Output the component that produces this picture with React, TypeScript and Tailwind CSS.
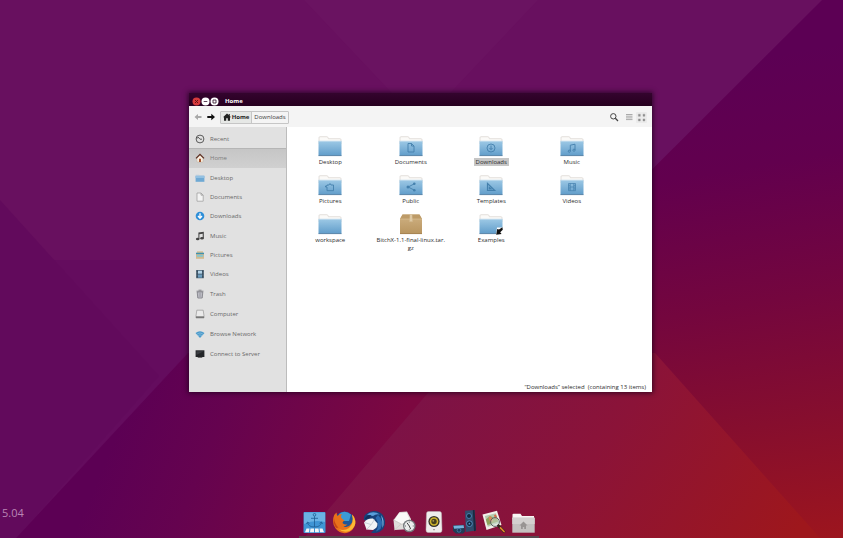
import { useState, type ReactNode } from "react";

type Glyph =
  | "none" | "document" | "download" | "music" | "picture" | "share" | "template" | "video" | "link";

const places: { name: string; icon: ReactNode }[] = [
  {
    name: "Recent",
    icon: (
      <g fill="none" stroke="#4c4c4c" strokeWidth="0.9">
        <circle cx="5" cy="5" r="3.9" />
        <path d="M3 3 5 5.2H7M1 3.5 3 4" />
      </g>
    ),
  },
  {
    name: "Home",
    icon: (
      <g>
        <path d="M2 5 5 2.2 8 5V9H2Z" fill="#f8eee0" stroke="#b9a793" strokeWidth="0.4" />
        <path d="M4 5.8H6V9H4Z" fill="#a5532e" />
        <path d="M1 5.4 5 1.4 9 5.4" fill="none" stroke="#5e2f22" strokeWidth="1.3" />
      </g>
    ),
  },
  {
    name: "Desktop",
    icon: (
      <g>
        <path d="M.8 1.5H4L4.5 2.3H9V5H.8Z" fill="#cfd8df" />
        <path d="M.6 2.8H9.4V8.8H.6Z" fill="#6fa9d4" />
        <path d="M.6 2.8H9.4V5H.6Z" fill="#93c1e2" />
      </g>
    ),
  },
  {
    name: "Documents",
    icon: <path d="M2 1H6L8.2 3.2V9.2H2ZM6 1V3.2H8.2" fill="#f3f3f3" stroke="#999" strokeWidth="0.7" />,
  },
  {
    name: "Downloads",
    icon: (
      <g>
        <circle cx="5" cy="5" r="4.3" fill="#2f8fd8" />
        <path d="M5 2.2V6.6M3 5 5 7.2 7 5" fill="none" stroke="#fff" strokeWidth="1.3" />
      </g>
    ),
  },
  {
    name: "Music",
    icon: (
      <g fill="#444">
        <path d="M3.4 1.6 8.8.8V7H7.7V2.7L4.4 3.2V8H3.4Z" />
        <ellipse cx="2.7" cy="8" rx="1.8" ry="1.3" />
        <ellipse cx="7" cy="7.2" rx="1.8" ry="1.3" />
      </g>
    ),
  },
  {
    name: "Pictures",
    icon: (
      <g>
        <path d="M2 1.2H8V3H2Z" fill="#d9c39a" />
        <path d="M1 2.7H9V5H1Z" fill="#3f91ad" />
        <path d="M1 4.2H9V8.8H1Z" fill="#d3ba8e" />
        <path d="M1.8 4.9H8.2V6.8H1.8Z" fill="#87c6d0" />
      </g>
    ),
  },
  {
    name: "Videos",
    icon: (
      <g>
        <path d="M1.2 1H8.8V9.2H1.2Z" fill="#344b5d" />
        <path d="M3 1.6H7V4.7H3Z" fill="#b3d2e6" />
        <path d="M3 5.4H7V8.7H3Z" fill="#6c9cbd" />
        <path d="M2 1.4V9" stroke="#8797a5" strokeWidth="0.6" strokeDasharray="0.8 0.8" />
        <path d="M8 1.4V9" stroke="#8797a5" strokeWidth="0.6" strokeDasharray="0.8 0.8" />
      </g>
    ),
  },
  {
    name: "Trash",
    icon: (
      <g fill="none" stroke="#77777f" strokeWidth="0.8">
        <path d="M1.5 2.2H8.5M3.5 1.2H6.5" />
        <path d="M2.2 3 2.8 9H7.2L7.8 3Z" fill="#c8c8d0" />
        <path d="M4.2 4V8M5.8 4V8" strokeWidth="0.5" />
      </g>
    ),
  },
  {
    name: "Computer",
    icon: (
      <g>
        <path d="M1.8 1.2H8.2L9 6.8V9H1V6.8Z" fill="#eaeaea" stroke="#8b8b8b" strokeWidth="0.6" />
        <path d="M1 7.3H9V9H1Z" fill="#777" />
      </g>
    ),
  },
  {
    name: "Browse Network",
    icon: (
      <g>
        <path d="M.5 4.1Q5 .2 9.5 4.1L5 9Z" fill="#4a9acb" />
        <path d="M1.9 5.2Q5 2.6 8.1 5.2M3.1 6.6Q5 5 6.9 6.6" fill="none" stroke="#a9cfe4" strokeWidth="0.5" />
      </g>
    ),
  },
  {
    name: "Connect to Server",
    icon: (
      <g>
        <path d="M.6 1.3H9.4V8H.6Z" fill="#232528" />
        <path d="M1.4 2.3H8.6L1.4 6Z" fill="#3a3d41" />
        <path d="M3 8H7L7.5 9H2.5Z" fill="#707070" />
      </g>
    ),
  },
];

const files: { name: string; glyph: Glyph; archive?: boolean }[] = [
  { name: "Desktop", glyph: "none" },
  { name: "Documents", glyph: "document" },
  { name: "Downloads", glyph: "download" },
  { name: "Music", glyph: "music" },
  { name: "Pictures", glyph: "picture" },
  { name: "Public", glyph: "share" },
  { name: "Templates", glyph: "template" },
  { name: "Videos", glyph: "video" },
  { name: "workspace", glyph: "none" },
  { name: "BitchX-1.1-final-linux.tar.gz", glyph: "none", archive: true },
  { name: "Examples", glyph: "link" },
];

function Wallpaper() {
  return (
    <svg
      className="absolute inset-0 h-full w-full"
      viewBox="0 0 843 538"
      preserveAspectRatio="none"
      aria-hidden="true"
    >
      <defs>
        <linearGradient id="right" gradientUnits="userSpaceOnUse" x1="740" y1="60" x2="820" y2="538">
          <stop offset="0" stopColor="#5c0054" />
          <stop offset="0.22" stopColor="#62004e" />
          <stop offset="0.5" stopColor="#74063e" />
          <stop offset="0.75" stopColor="#860e2e" />
          <stop offset="1" stopColor="#9c151e" />
        </linearGradient>
        <linearGradient id="band" gradientUnits="userSpaceOnUse" x1="130" y1="400" x2="370" y2="500">
          <stop offset="0" stopColor="#5c0054" />
          <stop offset="0.35" stopColor="#65034f" />
          <stop offset="1" stopColor="#7c0840" />
        </linearGradient>
        <linearGradient id="low" gradientUnits="userSpaceOnUse" x1="400" y1="370" x2="730" y2="620">
          <stop offset="0" stopColor="#7a1249" />
          <stop offset="0.5" stopColor="#8b1338" />
          <stop offset="1" stopColor="#9e171c" />
        </linearGradient>
      </defs>
      <path d="M0 0H843V538H0Z" fill="#68105f" />
      <path d="M304 0H538L421 124Z" fill="#6a1361" />
      <path d="M0 260H280L188 353 16 538H0Z" fill="#640c5e" />
      <path d="M0 200 159 376 16 538H0Z" fill="#620a5c" />
      <path d="M822 0H843V538H468V353Z" fill="url(#right)" />
      <path d="M188 353H468V538H16Z" fill="url(#band)" />
      <path d="M468 353H655L820 538H304L427 394Z" fill="url(#low)" />
    </svg>
  );
}

function FolderGlyph({ glyph }: { glyph: Glyph }) {
  const line = { fill: "none", stroke: "#4480ad", strokeWidth: 0.9 };
  switch (glyph) {
    case "document":
      return <path {...line} d="M9 7.5H12.5L15 10V16H9ZM12.5 7.5V10H15" />;
    case "download":
      return (
        <g {...line}>
          <circle cx="12" cy="12" r="4" />
          <path d="M12 9.5V13M10.5 12 12 13.8 13.5 12" />
        </g>
      );
    case "music":
      return (
        <g {...line}>
          <path d="M10.3 15V9.2L15 8.2V14" />
          <circle cx="9.3" cy="15.2" r="1.1" />
          <circle cx="14" cy="14.2" r="1.1" />
        </g>
      );
    case "picture":
      return <path {...line} d="M9 15.7V12H7.5V11H9V10H11L12 8.5 13 10H15.5V15.7Z" />;
    case "share":
      return (
        <g {...line}>
          <path d="M15.3 8.8 9.2 12 15.3 15.2" />
          <g fill="#4480ad" stroke="none">
            <circle cx="9" cy="12" r="1.5" />
            <circle cx="15.3" cy="8.8" r="1.3" />
            <circle cx="15.3" cy="15.2" r="1.3" />
          </g>
        </g>
      );
    case "template":
      return <path {...line} strokeWidth={1.2} d="M8.5 8.5V15.5H15.7ZM10.3 12.5V14H12Z" />;
    case "video":
      return (
        <path {...line} strokeWidth={0.7} d="M8.5 8.5H15.5V15.7H8.5ZM10.2 8.5V15.7M13.8 8.5V15.7M10.2 12H13.8M8.5 10.3H10.2M8.5 12.1H10.2M8.5 13.9H10.2M13.8 10.3H15.5M13.8 12.1H15.5M13.8 13.9H15.5" />
      );
    case "link":
      return (
        <g>
          <path d="M18 13.5H24V21H17Z" fill="#fff" />
          <path d="M23.4 13.2 20 15.6 18.2 15 17.2 20.7 22.6 20 21.2 18.2 23.8 15.8Z" fill="#111" />
        </g>
      );
    default:
      return null;
  }
}

function FolderIcon({ glyph }: { glyph: Glyph }) {
  return (
    <svg className="h-[21px] w-6" viewBox="0 0 24 21" aria-hidden="true">
      <defs>
        <linearGradient id="folder" x1="0" y1="0" x2="0" y2="1">
          <stop offset="0" stopColor="#9cc8e5" />
          <stop offset="1" stopColor="#619dca" />
        </linearGradient>
      </defs>
      <path d="M1 5V1.6Q1 .7 2 .7H8.8Q9.8.7 10 1.6L10.3 2.7H22Q23 2.7 23 3.7V8H1Z" fill="#fbfaf8" stroke="#d3cdc7" strokeWidth="0.6" />
      <path d="M.5 5.2H23.5V19.6H.5Z" fill="url(#folder)" />
      <path d="M.5 5.2H23.5" stroke="#bfdcee" strokeWidth="0.8" />
      <path d="M.5 19.6H23.5" stroke="#507da1" strokeWidth="0.9" />
      <FolderGlyph glyph={glyph} />
    </svg>
  );
}

function ArchiveIcon() {
  return (
    <svg className="h-[21px] w-6" viewBox="0 0 24 21" aria-hidden="true">
      <defs>
        <linearGradient id="box" x1="0" y1="0" x2="0" y2="1">
          <stop offset="0" stopColor="#cfb183" />
          <stop offset="1" stopColor="#b8955f" />
        </linearGradient>
      </defs>
      <path d="M3.5.5H20.5L23 5V20H1V5Z" fill="url(#box)" />
      <path d="M3.5.5H20.5L23 5H1Z" fill="#bd9b68" />
      <path d="M1 5H23" stroke="#d8be94" strokeWidth="0.7" />
      <path d="M10.8.5H13.2L13.5 8 12.6 7.3 12 8 11.4 7.3 10.6 8Z" fill="#ddc8a4" />
      <path d="M1 19.6H23" stroke="#a27f4e" strokeWidth="0.8" />
    </svg>
  );
}

const dock: { name: string; art: ReactNode }[] = [
  {
    name: "Docky",
    art: (
      <g>
        <rect x="1.5" y="2" width="22" height="21" rx="1" fill="#3f95d5" />
        <path d="M2 2.5H23V12Q12.5 9 2 14Z" fill="#6bb3e5" />
        <g transform="translate(.5)">
          <g fill="none" stroke="#1c5c92" strokeWidth="0.8">
            <circle cx="12" cy="4.8" r="1.3" />
            <path d="M12 6.3V17M8.5 8.3H15.5M5 12.5Q6 17 12 17T19 12.5M4 14 5 12 7 13.3M20 14 19 12 17 13.3" />
          </g>
          <path d="M2.5 22.3 4 18.5H7L6.5 22.3ZM7.5 22.3 8 18.5H11.5V22.3ZM12.5 22.3V18.5H16L16.5 22.3ZM17.5 22.3 17 18.5H20L21.5 22.3Z" fill="#f2f6f9" />
        </g>
      </g>
    ),
  },
  {
    name: "Firefox",
    art: (
      <g>
        <circle cx="12.5" cy="11.5" r="10" fill="#1f5797" />
        <path d="M7 4Q13 -.5 19 4.5L17 11H9Z" fill="#3c9bd5" />
        <path d="M2.2 5Q-.8 12.5 3.6 18.6 8 24 14.5 23 22 21 23.3 13.5 23.7 7.5 20 4.5 22 10 19 14 16 18.5 11.5 16.5 14 16.3 15.5 14.3 12.5 15 11 13.5 9.7 12 12.7 10.4 10.5 9.5 9.3 7.8 8.5 6 10 4 7 4 5.5 6Q4.5 4.5 4.8 2.5 3 3.5 2.2 5Z" fill="#e8711b" />
        <path d="M20 4.5Q22.5 13 17 18 12 21.5 6.5 19 12 23.5 18 20.7 24 17 23.3 11 22.8 7 20 4.5Z" fill="#fdb934" />
        <path d="M2 8Q2.5 14 6.5 17.5L4.2 18Q.6 13 2 8Z" fill="#c74714" />
      </g>
    ),
  },
  {
    name: "Thunderbird",
    art: (
      <g>
        <path d="M2 10Q1 4 8 1.7 16-.5 21 5 25 12 21.5 18.5 16 24.5 9 22.5 14 19 13 14Z" fill="#17427c" />
        <path d="M5 4.5Q11 0 18 4.5 14 3.5 11 6Z" fill="#5a9edb" />
        <path d="M16 5Q22.5 11 18.5 19L14 21.5Q18.5 14 13.5 8Z" fill="#2b6cb2" />
        <path d="M19 5Q23.5 11 20.5 18 21 11 19 5Z" fill="#78b4e2" />
        <path d="M2 12.5 Q5 8 11 8.5 L15.5 13.5Q15.5 18 11 20L4.5 19.5Z" fill="#f1f3f5" />
        <path d="M2.5 12.5 9.2 14.6 12.5 9.5M4.5 19.5 9.2 14.6" fill="none" stroke="#b7c1cc" strokeWidth="0.7" />
        <path d="M2.5 9.5Q4 5 9 5L7.5 8.3Z" fill="#10305b" />
      </g>
    ),
  },
  {
    name: "Mail notifier",
    art: (
      <g>
        <path d="M1.5 10 7.5 2 15 1.5 19 9V19L2.5 20Z" fill="#dfdddb" />
        <path d="M7 3.2 14.5 2.6 17.5 9 10 14 2.5 10Z" fill="#faf9f8" />
        <path d="M1.5 10 10 14.5 19 9M2.5 20 9 14" fill="none" stroke="#c9c5c2" strokeWidth="0.7" />
        <circle cx="17.3" cy="16" r="6.3" fill="#75797d" />
        <circle cx="17.3" cy="16" r="5" fill="#eceded" />
        <path d="M17.3 16 15 12.8M17.3 16 18.7 19.2M17.3 11.7V12.5M17.3 19.5V20.3M13 16H13.8M20.8 16H21.6" stroke="#333" strokeWidth="0.9" />
      </g>
    ),
  },
  {
    name: "Rhythmbox",
    art: (
      <g>
        <path d="M6.5 1.5H17.5Q19.5 1.5 19.5 3.5L20 20Q20 22.5 18 22.5H6Q4 22.5 4 20L4.5 3.5Q4.5 1.5 6.5 1.5Z" fill="#eeeceb" stroke="#bab6b6" strokeWidth="0.5" />
        <circle cx="12" cy="11.5" r="5.6" fill="#35332c" />
        <circle cx="12" cy="11.5" r="4.3" fill="#cfb52c" />
        <circle cx="12" cy="11.5" r="2.7" fill="#463f1c" />
        <circle cx="11.3" cy="10.8" r="0.9" fill="#ad9d50" />
        <path d="M11 19.7H13" stroke="#9a9492" strokeWidth="1" />
      </g>
    ),
  },
  {
    name: "Sound and video",
    art: (
      <g>
        <path d="M13 .8 22.5 0 24 20.5 13.8 22Z" fill="#304d6c" />
        <path d="M20.8 0 22.5 0 24 20.5 22 21.2Z" fill="#182b42" />
        <circle cx="17" cy="6" r="2.5" fill="#122940" stroke="#4d87b7" strokeWidth="0.9" />
        <circle cx="17.4" cy="13.7" r="2.9" fill="#122940" stroke="#5795c8" strokeWidth="0.9" />
        <circle cx="17.4" cy="13.7" r="0.9" fill="#5796c7" />
        <path d="M1 15.5 12 14.8 13 21.5 11 23.5H4L1 21Z" fill="#213c56" />
        <path d="M1.3 15.8 11.6 15.2 12 18 2.2 18.7Z" fill="#76b2dc" />
        <circle cx="7" cy="20.3" r="1.9" fill="#173a5b" stroke="#4a86b6" strokeWidth="0.7" />
      </g>
    ),
  },
  {
    name: "Image viewer",
    art: (
      <g>
        <path d="M.5 4.5 15 .8 19.5 15 4.5 20Z" fill="#f2efe9" />
        <path d="M2.8 6 13.9 3.2 17 13 5.8 16.7Z" fill="#b5cbb0" />
        <path d="M3.8 9.5 8 6 12 8 14.6 6 16.2 11.5 5.5 15Z" fill="#8fa35c" />
        <path d="M6.5 7 9 6.2 11 11 8 12Z" fill="#d98b5b" />
        <path d="M12 5 14 4.4 15 8 13 9Z" fill="#d96d4c" />
        <circle cx="13" cy="12" r="4.4" fill="#dce9e6" fillOpacity="0.45" stroke="#5c6162" strokeWidth="1" />
        <path d="M16.5 15.7 22 21.5" stroke="#33241d" strokeWidth="2.8" strokeLinecap="round" />
        <path d="M18.5 17.8 22 21.5" stroke="#e1862b" strokeWidth="1.8" strokeLinecap="round" />
      </g>
    ),
  },
  {
    name: "Files",
    art: (
      <g>
        <path d="M.5 8V4.5Q.5 3.7 1.5 3.7H8.5L10 6H22V9H.5Z" fill="#f8f6f4" />
        <path d="M.3 7.7H22.7V22.7H.3Z" fill="#c4c1c0" />
        <path d="M.3 7.7H22.7V14H.3Z" fill="#d3d0cf" />
        <path d="M11.5 11.5 7.5 15.5H9V19H10.8V17H12.2V19H14V15.5H15.5Z" fill="#989493" />
      </g>
    ),
  },
];

export default function App() {
  const [place, setPlace] = useState("Home");
  const [selected, setSelected] = useState("Downloads");

  const placeRow = (p: (typeof places)[number], size: string) => (
    <li key={p.name} className={`flex ${size}`}>
      <button
        onClick={() => setPlace(p.name)}
        className={`flex w-full items-center gap-[5px] border-t pl-[6px] text-left ${
          place === p.name
            ? "border-[#b5b5b5] bg-linear-to-b from-[#c6c6c6] to-[#d0d0d0] text-[#7c7c7c]"
            : "border-transparent"
        }`}
      >
        <svg className="size-[10px] shrink-0" viewBox="0 0 10 10" aria-hidden="true">{p.icon}</svg>
        {p.name}
      </button>
    </li>
  );

  return (
    <div className="relative flex min-h-screen flex-col overflow-hidden bg-[#640a5c] font-['Open_Sans','Noto_Sans',sans-serif] text-[6px] leading-[8px]">
      <Wallpaper />
      <section
        aria-label="File manager"
        className="relative mt-[93px] mr-[191px] ml-[189px] flex flex-col shadow-[0_0_5px_1px_rgba(25,0,25,0.75)]"
      >
        <header className="flex h-[13px] items-center bg-linear-to-b from-[#34042e] to-[#26001f] pt-[3px] pl-[3px] text-white">
          <div className="flex">
            <button aria-label="Close" className="size-[9px]">
              <svg viewBox="0 0 9 9" aria-hidden="true">
                <circle cx="4.5" cy="4.5" r="4" fill="#d63a3c" />
                <path d="M3 3 6 6M6 3 3 6" stroke="#681416" strokeWidth="1" />
              </svg>
            </button>
            <button aria-label="Minimize" className="size-[9px]">
              <svg viewBox="0 0 9 9" aria-hidden="true">
                <circle cx="4.5" cy="4.5" r="4" fill="#fff" />
                <path d="M2.7 4.5H6.3" stroke="#5c4359" strokeWidth="1" />
              </svg>
            </button>
            <button aria-label="Maximize" className="size-[9px]">
              <svg viewBox="0 0 9 9" aria-hidden="true">
                <circle cx="4.5" cy="4.5" r="4" fill="#fff" />
                <path d="M3 3H6V6H3Z" fill="none" stroke="#3e253b" strokeWidth="0.9" />
              </svg>
            </button>
          </div>
          <h1 className="ml-[6px] font-bold">Home</h1>
        </header>

        <div className="flex h-[21px] items-center bg-[#f4f4f4] pt-px pr-[5px] pl-[4px] text-[#3c3c3c]">
          <button aria-label="Back" className="size-[10px]">
            <svg viewBox="0 0 10 10" aria-hidden="true">
              <path d="M1.5 5 5 2V4H8.5V6H5V8Z" fill="#a8a8a8" />
            </svg>
          </button>
          <button aria-label="Forward" className="ml-[3px] size-[10px]">
            <svg viewBox="0 0 10 10" aria-hidden="true">
              <path d="M9 5 5.3 1.7V3.9H1.3V6.1H5.3V8.3Z" fill="#111" />
            </svg>
          </button>
          <nav aria-label="Path" className="ml-[4px] flex h-[13px] rounded-[1px] border border-[#c6c6c6]">
            <button className="flex w-[31px] items-center justify-center gap-px border-r border-[#c6c6c6] bg-[#e6e8e6] font-bold text-[#222]">
              <svg className="size-[8px] shrink-0" viewBox="0 0 8 8" aria-hidden="true">
                <path d="M4 .4 0 4.3H1V7.8H3.2V5.3H4.8V7.8H7V4.3H8L6.8 3.1V1H5.8V2.1Z" fill="#222" />
              </svg>
              Home
            </button>
            <button className="w-[36px] whitespace-nowrap">Downloads</button>
          </nav>
          <div className="ml-auto flex items-center">
            <button aria-label="Search" className="size-[10px]">
              <svg viewBox="0 0 10 10" aria-hidden="true">
                <circle cx="4.3" cy="4.3" r="2.7" fill="none" stroke="#444" strokeWidth="1" />
                <path d="M6.3 6.3 9 9" stroke="#444" strokeWidth="1.3" />
              </svg>
            </button>
            <button aria-label="List view" className="ml-[6px] size-[8px]">
              <svg viewBox="0 0 8 8" aria-hidden="true">
                <path d="M1 1.5H7.5M1 3.2H7.5M1 4.9H7.5M1 6.6H7.5" stroke="#aaa" strokeWidth="1" />
              </svg>
            </button>
            <button aria-label="Icon view" aria-pressed="true" className="ml-[3px] size-[11px] rounded-[1px] bg-[#ebebeb]">
              <svg viewBox="0 0 11 11" aria-hidden="true">
                <path d="M2.4 2.2H4.3V4.3H2.4ZM7 2.2H8.9V4.3H7ZM2.4 6.9H4.3V9H2.4ZM7 6.9H8.9V9H7Z" fill="#8c8c8c" stroke="#999" strokeWidth="0.4" />
              </svg>
            </button>
          </div>
        </div>

        <div className="flex min-h-[265px]">
          <nav aria-label="Places" className="w-[98px] shrink-0 border-r border-[#bcbcbc] bg-[#e1e1e1] pt-[2px] text-[#686868]">
            <ul className="flex h-[174px] flex-col">{places.slice(0, 9).map((p) => placeRow(p, "flex-1"))}</ul>
            <ul>{places.slice(9).map((p) => placeRow(p, "h-5"))}</ul>
          </nav>
          <main className="flex min-w-0 flex-1 flex-col bg-white">
            <ul className="grid grid-cols-4 gap-y-[9px] pt-[9px] pr-[40px] pl-[3px] text-[#2c2c2c]">
              {files.map((f) => (
                <li key={f.name} className="flex justify-center">
                  <button onClick={() => setSelected(f.name)} className="flex w-[74px] flex-col items-center gap-px">
                    {f.archive ? <ArchiveIcon /> : <FolderIcon glyph={f.glyph} />}
                    <span
                      className={`max-w-full px-[2px] text-center break-all ${
                        selected === f.name ? "bg-[#c6c6c6]" : ""
                      }`}
                    >
                      {f.name}
                    </span>
                  </button>
                </li>
              ))}
            </ul>
            <p className="mt-auto pr-[6px] pb-px text-right whitespace-pre text-[#2c2c2c]">
              “Downloads” selected  (containing 13 items)
            </p>
          </main>
        </div>
      </section>

      <footer className="relative mt-auto flex items-end">
        <p className="absolute bottom-[17px] left-[2px] text-[11px] leading-4 text-[#b985b4]">5.04</p>
        <nav aria-label="Dock" className="mx-auto pr-[6px]">
          <ul className="flex border-b-2 border-[#57494f] pb-[2px]">
            {dock.map((d) => (
              <li key={d.name} className="flex w-[30px] justify-center">
                <button aria-label={d.name} className="size-6">
                  <svg className="size-6" viewBox="0 0 24 24" aria-hidden="true">{d.art}</svg>
                </button>
              </li>
            ))}
          </ul>
        </nav>
      </footer>
    </div>
  );
}
